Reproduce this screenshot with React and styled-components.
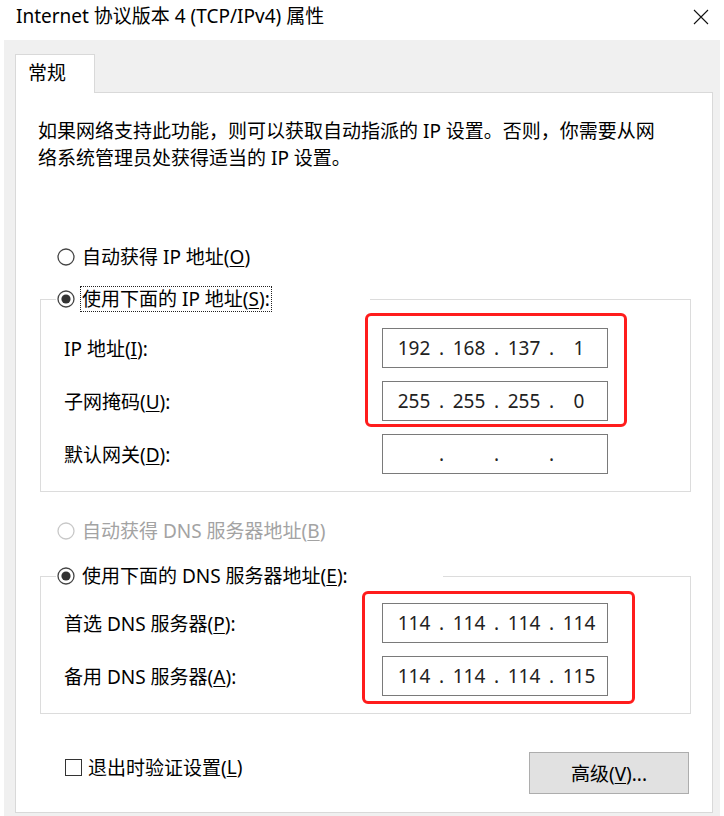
import React from "react";
import styled, { createGlobalStyle } from "styled-components";

const GlobalStyle = createGlobalStyle`
  body {
    margin: 0;
    background: #fff;
    color: #000;
    font-family: "Noto Sans", "Noto Sans CJK SC", sans-serif;
  }
`;

const Window = styled.div`
  width: 724px;
  height: 816px;
  display: flex;
  flex-direction: column;
  overflow: hidden;
`;

const TitleBar = styled.div`
  flex: none;
  height: 40px;
  box-sizing: border-box;
  padding: 0 15px 0 16px;
  display: flex;
  justify-content: space-between;
  align-items: flex-start;
`;

const Title = styled.div`
  font-size: 19px;
  line-height: 32px;
`;

const CloseIcon = styled.svg`
  margin-top: 9px;
`;

const Frame = styled.div`
  flex: 1;
  margin: 0 4px;
  background: #f0f0f0;
  padding: 14px 7px 3px 11px;
  display: flex;
  flex-direction: column;
`;

const TabStrip = styled.div`
  display: flex;
`;

const Tab = styled.div`
  position: relative;
  z-index: 1;
  width: 80px;
  height: 39px;
  margin-bottom: -1px;
  box-sizing: border-box;
  background: #fff;
  border: 1px solid #d9d9d9;
  border-bottom: none;
  padding-left: 12px;
  font-size: 19px;
  line-height: 37px;
`;

const Panel = styled.div`
  flex: 1;
  background: #fff;
  border: 1px solid #d9d9d9;
  padding: 25px 21px 0 22px;
  display: flex;
  flex-direction: column;
  font-size: 19px;
`;

const Intro = styled.p`
  margin: 0;
  line-height: 27px;
`;

const Choice = styled.div`
  display: flex;
  align-items: center;
  height: 30px;
  margin-top: ${(p) => p.$top || 0}px;
  padding-left: ${(p) => p.$indent}px;
  color: ${(p) => (p.$disabled ? "#a3a3a3" : "#000")};
`;

const ChoiceText = styled.span`
  margin-left: 5px;
  padding: 0 1px;
  line-height: 24px;
  white-space: nowrap;
  border: 1px dotted ${(p) => (p.$focused ? "#222" : "transparent")};
`;

const Key = styled.span`
  text-decoration: underline;
  text-underline-offset: 2px;
`;

const Group = styled.fieldset`
  margin: ${(p) => p.$top}px 0 0 2px;
  padding: 0;
  border: 1px solid #dcdcdc;
  min-inline-size: 0;
`;

const GroupLegend = styled.legend`
  padding: 0;
  margin-left: 15px;
  width: ${(p) => p.$width}px;
`;

const FieldGrid = styled.div`
  display: grid;
  grid-template-columns: 1fr 226px;
  grid-auto-rows: 40px;
  row-gap: 13px;
  padding: ${(p) => p.$top}px 82px 17px 23px;
`;

const FieldLabel = styled.div`
  grid-column: 1;
  grid-row: ${(p) => p.$row};
  align-self: center;
  white-space: nowrap;
`;

const AddressBox = styled.div`
  grid-column: 2;
  grid-row: ${(p) => p.$row};
  border: 1px solid #7a7a7a;
  padding-left: 9px;
  display: grid;
  grid-template-columns: 44px 11px 44px 11px 44px 11px 44px;
  align-items: center;
  text-align: center;
  font-size: 19px;
  color: #222;
`;

const Highlight = styled.div`
  grid-column: 2;
  grid-row: 1 / span 2;
  margin: ${(p) => p.$inset};
  border: 3px solid #ff1c1c;
  border-radius: 6px;
  pointer-events: none;
`;

const Footer = styled.div`
  margin-top: 38px;
  padding: 0 2px 0 27px;
  display: flex;
  justify-content: space-between;
  align-items: flex-start;
`;

const CheckRow = styled.label`
  display: flex;
  align-items: center;
  height: 28px;
  margin-top: 1px;
`;

const CheckBox = styled.span`
  width: 17px;
  height: 17px;
  box-sizing: border-box;
  border: 1px solid #333;
  margin-right: 6px;
`;

const Button = styled.button`
  width: 160px;
  height: 42px;
  background: #e1e1e1;
  border: 1px solid #adadad;
  font-family: inherit;
  font-size: 19px;
  color: #000;
  padding: 0;
`;

const Radio = ({ checked, disabled }) => (
  <svg width="18" height="18" viewBox="0 0 18 18">
    <circle
      cx="9"
      cy="9"
      r="8"
      fill="#fff"
      stroke={disabled ? "#c8c8c8" : "#444"}
      strokeWidth="1.3"
    />
    {checked && <circle cx="9" cy="9" r="4.6" fill="#333" />}
  </svg>
);

const Option = ({ indent, top, checked, disabled, focused, children }) => (
  <Choice $indent={indent} $top={top} $disabled={disabled}>
    <Radio checked={checked} disabled={disabled} />
    <ChoiceText $focused={focused}>{children}</ChoiceText>
  </Choice>
);

const Address = ({ row, parts }) => (
  <AddressBox $row={row}>
    <span>{parts[0]}</span>
    <span>.</span>
    <span>{parts[1]}</span>
    <span>.</span>
    <span>{parts[2]}</span>
    <span>.</span>
    <span>{parts[3]}</span>
  </AddressBox>
);

export default function App() {
  return (
    <Window>
      <GlobalStyle />
      <TitleBar>
        <Title>Internet 协议版本 4 (TCP/IPv4) 属性</Title>
        <CloseIcon width="16" height="16" viewBox="0 0 16 16">
          <path d="M1 1L15 15M15 1L1 15" stroke="#111" strokeWidth="1.1" fill="none" />
        </CloseIcon>
      </TitleBar>
      <Frame>
        <TabStrip>
          <Tab>常规</Tab>
        </TabStrip>
        <Panel>
          <Intro>
            如果网络支持此功能，则可以获取自动指派的 IP 设置。否则，你需要从网
            <br />
            络系统管理员处获得适当的 IP 设置。
          </Intro>

          <Option indent={19} top={70}>
            自动获得 IP 地址(<Key>O</Key>)
          </Option>
          <Group $top={12}>
            <GroupLegend $width={314}>
              <Option indent={1} checked focused>
                使用下面的 IP 地址(<Key>S</Key>):
              </Option>
            </GroupLegend>
            <FieldGrid $top={14}>
              <Highlight $inset="-15px -19px -6px -17px" />
              <FieldLabel $row={1}>
                IP 地址(<Key>I</Key>):
              </FieldLabel>
              <Address row={1} parts={["192", "168", "137", "1"]} />
              <FieldLabel $row={2}>
                子网掩码(<Key>U</Key>):
              </FieldLabel>
              <Address row={2} parts={["255", "255", "255", "0"]} />
              <FieldLabel $row={3}>
                默认网关(<Key>D</Key>):
              </FieldLabel>
              <Address row={3} parts={["", "", "", ""]} />
            </FieldGrid>
          </Group>

          <Option indent={19} top={24} disabled>
            自动获得 DNS 服务器地址(<Key>B</Key>)
          </Option>
          <Group $top={15}>
            <GroupLegend $width={387}>
              <Option indent={1} checked>
                使用下面的 DNS 服务器地址(<Key>E</Key>):
              </Option>
            </GroupLegend>
            <FieldGrid $top={12}>
              <Highlight $inset="-12px -27px -8px -20px" />
              <FieldLabel $row={1}>
                首选 DNS 服务器(<Key>P</Key>):
              </FieldLabel>
              <Address row={1} parts={["114", "114", "114", "114"]} />
              <FieldLabel $row={2}>
                备用 DNS 服务器(<Key>A</Key>):
              </FieldLabel>
              <Address row={2} parts={["114", "114", "114", "115"]} />
            </FieldGrid>
          </Group>

          <Footer>
            <CheckRow>
              <CheckBox />
              退出时验证设置(<Key>L</Key>)
            </CheckRow>
            <Button>
              高级(<Key>V</Key>)...
            </Button>
          </Footer>
        </Panel>
      </Frame>
    </Window>
  );
}
